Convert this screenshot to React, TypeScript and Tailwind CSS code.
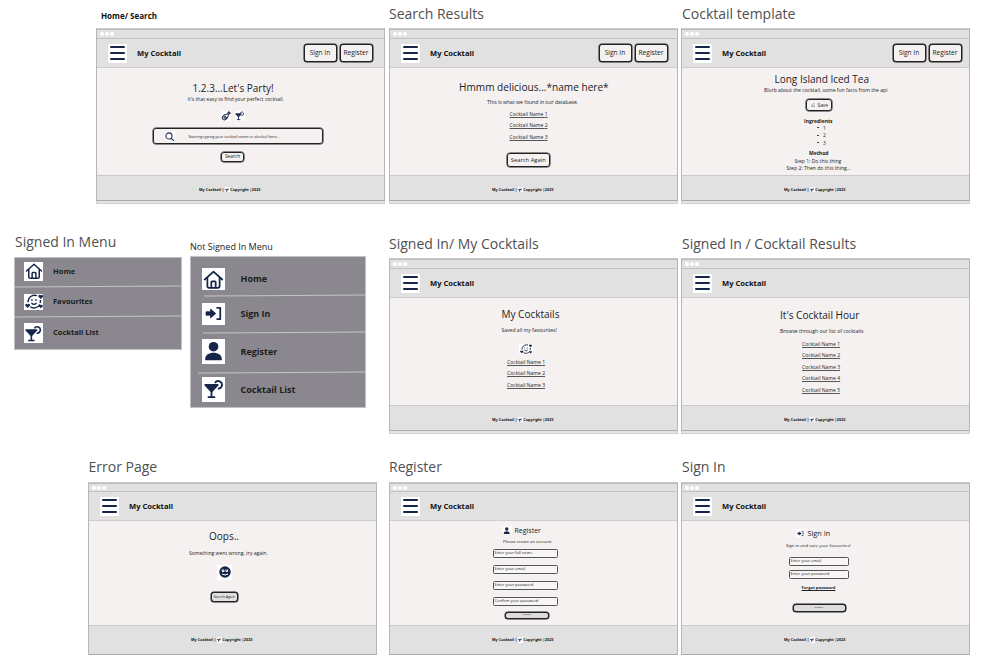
import type { ReactNode } from "react";

const NAVY = "#16264a";

function HomeIcon({ className = "" }: { className?: string }) {
  return (
    <svg viewBox="0 0 24 24" className={className} fill="none" stroke={NAVY} strokeWidth="2" strokeLinejoin="round" strokeLinecap="round">
      <path d="M2 12 12 3l10 9" />
      <path d="M5 10v9.500a2 2 0 0 0 2 2h10a2 2 0 0 0 2-2V10" />
      <path d="M9.500 21v-6a1 1 0 0 1 1-1h3a1 1 0 0 1 1 1v6" />
    </svg>
  );
}

function LoveFaceIcon({ className = "" }: { className?: string }) {
  return (
    <svg viewBox="0 0 24 20" className={className} fill="none" stroke={NAVY} strokeWidth="1.900">
      <path d="M16 2.200C10 .4 4 4 4 11M7 17c3 2.500 10 2.500 13-3M20.500 8v4" />
      <path d="M8 8.500q1.200-1.500 2.400 0M13.500 8.500q1.200-1.500 2.400 0M8.500 12q3.500 3.500 7 0" strokeWidth="1.500" />
      <path d="M21 6.500l-3-3a1.500 1.500 0 0 1 3-1.500 1.500 1.500 0 0 1 3 1.500zM3.500 18.500l-3-3a1.500 1.500 0 0 1 3-1.500 1.500 1.500 0 0 1 3 1.500zM21 19l-2.500-2.500a1.300 1.300 0 0 1 2.500-1.500 1.300 1.300 0 0 1 2.500 1.500z" fill={NAVY} stroke="none" />
    </svg>
  );
}

function MartiniIcon({ className = "" }: { className?: string }) {
  return (
    <svg viewBox="0 0 24 24" className={className} fill="none" stroke={NAVY} strokeWidth="2.200">
      <path d="M1.500 7h15L9.500 14.500h-1z" fill={NAVY} strokeLinejoin="round" />
      <path d="M9 14v7.500M4.500 21.800h9" />
      <path d="M13.200 4.800a4.500 4.500 0 1 1 3.300 6.700" />
    </svg>
  );
}

function BottleIcon({ className = "" }: { className?: string }) {
  return (
    <svg viewBox="0 0 24 24" className={className} fill="none" stroke={NAVY} strokeWidth="2.500">
      <path d="M18 3.500 20.500 6 17 9.500c1.500 4-5 12-9 12S1.500 17 4 13s7-6 10.500-6z" />
      <path d="m18 1 5 5M8 11l6 6M6 14l5 5" />
    </svg>
  );
}

function SearchIcon({ className = "" }: { className?: string }) {
  return (
    <svg viewBox="0 0 24 24" className={className} fill="none" stroke={NAVY} strokeWidth="2.600">
      <circle cx="10" cy="10" r="7.800" />
      <path d="m15.500 15.500 7 7" />
    </svg>
  );
}

function EnterIcon({ className = "" }: { className?: string }) {
  return (
    <svg viewBox="0 0 24 20" className={className}>
      <path d="M2 7.700h6V4l7 6-7 6v-3.700H2z" fill={NAVY} stroke={NAVY} strokeLinejoin="round" />
      <path d="M16 2.500h5v15h-5" fill="none" stroke={NAVY} strokeWidth="2.400" strokeLinejoin="round" />
    </svg>
  );
}

function PersonIcon({ className = "" }: { className?: string }) {
  return (
    <svg viewBox="0 0 24 24" className={className} fill={NAVY}>
      <circle cx="12" cy="6.500" r="5.500" />
      <path d="M2.500 22v-1.500C2.500 16 7 13.500 12 13.500s9.500 2.500 9.500 7V22z" />
    </svg>
  );
}

function WinkIcon({ className = "" }: { className?: string }) {
  return (
    <svg viewBox="0 0 24 24" className={className}>
      <circle cx="12" cy="12" r="11.500" fill={NAVY} />
      <path d="M5 8h5v3H6M14 7v4h3V7M6 16q6 4 12 0" fill="none" stroke="#fff" strokeWidth="2" />
    </svg>
  );
}

function Btn({ children, className = "" }: { children: ReactNode; className?: string }) {
  return (
    <div className={`flex shrink-0 items-center justify-center rounded-[3px] border border-[#222] whitespace-nowrap text-[#222] shadow-[0_0_0_0.5px_#222] ${className}`}>
      {children}
    </div>
  );
}

function Line({ children, className = "" }: { children: ReactNode; className?: string }) {
  return <div className={`h-[6px] shrink-0 leading-[6px] whitespace-nowrap ${className}`}>{children}</div>;
}

function Heading({ children, className = "" }: { children: ReactNode; className?: string }) {
  return <h2 className={`h-[12px] shrink-0 leading-[12px] whitespace-nowrap text-[#222] ${className}`}>{children}</h2>;
}

function Links({ count, className = "" }: { count: number; className?: string }) {
  return (
    <div className={`flex flex-col gap-[5.5px] text-[5.05px] underline decoration-[#555] decoration-[0.5px] underline-offset-[1px] ${className}`}>
      {Array.from({ length: count }, (_, i) => (
        <Line key={i}>Cocktail Name {i + 1}</Line>
      ))}
    </div>
  );
}

type FrameProps = {
  title: string;
  titleClass?: string;
  authClass?: string;
  short?: boolean;
  children: ReactNode;
};

function Frame({ title, titleClass = "h-[28px] pb-[4px] text-[14px] text-[#505050]", authClass, short, children }: FrameProps) {
  return (
    <section className="w-[289px] shrink-0">
      <h1 className={`flex items-end leading-[20px] whitespace-nowrap ${titleClass}`}>{title}</h1>
      <div className="border-x border-t border-x-[#b6b6b6] border-t-[#cbcbcb]">
        <div className={`flex items-center gap-[1px] border-t border-[#bdbdbd] bg-[#e1e1e1] pl-[3px] ${short ? "h-[8px]" : "h-[9px]"}`}>
          <i className="size-[4px] rounded-full bg-white" />
          <i className="size-[4px] rounded-full bg-white" />
          <i className="size-[4px] rounded-full bg-white" />
        </div>
        <header className="flex h-[30px] items-center border-y border-t-[#c2c2c2] border-b-[#cdcdcd] bg-[#e1e1e1] pl-[10.5px]">
          <div className="flex h-[19px] w-[19.5px] flex-col items-center justify-center gap-[3.5px] bg-white">
            <b className="h-[2.500px] w-[15.5px] rounded-full bg-[#16264a]" />
            <b className="h-[2.500px] w-[15.5px] rounded-full bg-[#16264a]" />
            <b className="h-[2.500px] w-[15.5px] rounded-full bg-[#16264a]" />
          </div>
          <strong className="pl-[10px] text-[7.6px] leading-[10px] whitespace-nowrap text-[#111]">My Cocktail</strong>
          {authClass && (
            <div className={`ml-auto flex gap-[3px] text-[6.6px] ${authClass}`}>
              <Btn className="h-[18px] w-[33px] bg-[#f5f1f1]">Sign In</Btn>
              <Btn className="h-[18px] w-[33px] bg-[#f5f1f1]">Register</Btn>
            </div>
          )}
        </header>
        <main className={`flex flex-col overflow-hidden bg-[#f5f1f1] text-[5px] text-[#222] ${short ? "h-[104px]" : "h-[107px]"}`}>{children}</main>
        <footer className={`flex items-center border-y border-t-[#c9c9c9] border-b-[#ababab] bg-[#e1e1e1] pl-[102px] text-[3.8px] font-bold whitespace-nowrap text-[#111] ${short ? "h-[30px]" : "h-[26px] pt-[3.500px]"}`}>
          My Cocktail |
          <span className="mx-[0.5px] inline-block bg-white p-[0.3px]">
            <MartiniIcon className="size-[4.500px]" />
          </span>
          Copyright |2023
        </footer>
      </div>
      {!short && <div className="h-[3px] border-x border-b border-[#d0d0d0] bg-[#e4e4e4]" />}
    </section>
  );
}

function Field({ children, className = "" }: { children: ReactNode; className?: string }) {
  return (
    <div className={`flex h-[9px] shrink-0 items-center rounded-[1.5px] border border-[#555] bg-[#f8f5f6] pb-px pl-[0.5px] text-[4px] leading-[6px] whitespace-nowrap ${className}`}>
      {children}
    </div>
  );
}

const TITLE3 = "h-[48px] pb-[5px] text-[14px] text-[#505050]";

export default function App() {
  return (
    <div className="h-[666px] w-[988px] overflow-hidden bg-white font-['Open_Sans',sans-serif]">
      <div className="flex pl-[96px]">
        <Frame title="Home/ Search" titleClass="h-[28px] pb-[2px] pl-[5px] text-[8px] font-bold text-[#111]" authClass="pr-[11.500px]">
          <Heading className="mt-[13.7px] ml-[95.5px] text-[10px]">1.2.3...Let's Party!</Heading>
          <Line className="mt-[2.2px] ml-[90.5px] text-[5.05px]">It's that easy to find your perfect cocktail.</Line>
          <div className="mt-[9px] ml-[123.500px] flex h-[10.5px] shrink-0 gap-[4px]">
            <span className="flex w-[10px] items-center justify-center bg-white"><BottleIcon className="size-[10px]" /></span>
            <span className="flex w-[10px] items-center justify-center bg-white"><MartiniIcon className="size-[9.500px]" /></span>
          </div>
          <div className="mt-[7px] ml-[55.5px] flex h-[16px] w-[170px] shrink-0 items-center rounded-[3px] border border-[#222] shadow-[0_0_0_0.5px_#222]">
            <span className="ml-[11px] flex h-[10px] w-[10px] items-center justify-center bg-white"><SearchIcon className="size-[9.500px]" /></span>
            <span className="ml-[14px] text-[3.8px] whitespace-nowrap">Starting typing your cocktail name or alcohol here...</span>
          </div>
          <Btn className="mt-[8px] ml-[124px] h-[10px] w-[23px] pb-px text-[4.8px]">Search</Btn>
        </Frame>
        <div className="ml-[4px]">
          <Frame title="Search Results" authClass="pr-[9.500px]">
            <Heading className="mt-[13px] ml-[69px] text-[10.1px]">Hmmm delicious...*name here*</Heading>
            <Line className="mt-[5.7px] ml-[97px] text-[5.1px]">This is what we found in our database.</Line>
            <Links count={3} className="mt-[6px] ml-[119.500px]" />
            <Btn className="mt-[13.5px] ml-[116.500px] h-[13.500px] w-[43.500px] text-[5.8px]">Search Again</Btn>
          </Frame>
        </div>
        <div className="ml-[3px]">
          <Frame title="Cocktail template" titleClass="h-[28px] pb-[4px] pl-px text-[14px] text-[#505050]" authClass="pr-[7.500px]">
            <Heading className="mt-[5.200px] ml-[92.500px] text-[10px]">Long Island Iced Tea</Heading>
            <Line className="mt-[1.600px] ml-[82px] text-[5.05px]">Blurb about the cocktail, some fun facts from the api</Line>
            <Btn className="mt-[6.500px] ml-[124px] h-[12px] w-[26px] gap-[2px] text-[4.8px]">
              <span className="bg-white p-[0.5px]"><LoveFaceIcon className="size-[4.500px]" /></span>
              Save
            </Btn>
            <Line className="mt-[6.300px] ml-[122px] font-bold">Ingredients</Line>
            <ul className="mt-[1.3px] ml-[135px] flex flex-col gap-[1.35px]">
              {[1, 2, 3].map((n) => (
                <li key={n} className="flex h-[6px] items-center gap-[4px] leading-[6px]">
                  <i className="h-px w-[2px] bg-[#444]" />
                  {n}
                </li>
              ))}
            </ul>
            <Line className="mt-[4.3px] ml-[127px] font-bold">Method</Line>
            <Line className="mt-[1.7px] ml-[112.5px]">Step 1: Do this thing</Line>
            <Line className="mt-[1px] ml-[104.500px] text-[5.100px]">Step 2: Then do this thing...</Line>
          </Frame>
        </div>
      </div>

      <div className="flex pl-[14px]">
        <section className="w-[168px]">
          <h1 className="flex h-[53px] items-end pb-[5px] pl-px text-[14px] leading-[20px] whitespace-nowrap text-[#505050]">Signed In Menu</h1>
          <nav className="h-[92.500px] border border-[#c2c2c6] bg-[#8a888e] text-[7.5px] font-bold text-[#1c1c1c]">
            <div className="flex h-[27.500px] items-center gap-[10px] pb-px pl-[9px]">
              <span className="flex h-[19px] w-[19px] items-center justify-center bg-white"><HomeIcon className="size-[18px]" /></span>
              Home
            </div>
            <div className="h-[1.3px] -rotate-[0.3deg] bg-[#c4c4c8]" />
            <div className="flex h-[29.500px] items-center gap-[10px] pl-[9px]">
              <span className="flex h-[16px] w-[19px] items-center justify-center bg-white"><LoveFaceIcon className="h-[15px] w-[18px]" /></span>
              Favourites
            </div>
            <div className="h-[1.3px] -rotate-[0.3deg] bg-[#c4c4c8]" />
            <div className="flex h-[31px] items-center gap-[10px] pl-[9px]">
              <span className="flex h-[20px] w-[19px] items-center justify-center bg-white"><MartiniIcon className="size-[17px]" /></span>
              Cocktail List
            </div>
          </nav>
        </section>
        <section className="ml-[8px] w-[175.500px]">
          <h1 className="flex h-[52px] items-end text-[9px] leading-[19px] whitespace-nowrap text-[#222]">Not Signed In Menu</h1>
          <nav className="flex h-[152px] flex-col border border-[#c2c2c6] bg-[#8a888e] text-[9px] font-bold text-[#1c1c1c]">
            <div className="mt-[11px] flex h-[22px] items-center gap-[15.500px] pl-[11px]">
              <span className="flex h-[22px] w-[23px] items-center justify-center bg-white"><HomeIcon className="size-[21px]" /></span>
              Home
            </div>
            <div className="mt-[5px] ml-[13px] h-[1.3px] -rotate-[0.3deg] bg-[#c4c4c8]" />
            <div className="mt-[6.700px] flex h-[22px] items-center gap-[15.500px] pl-[11px]">
              <span className="flex h-[22px] w-[23px] items-center justify-center bg-white"><EnterIcon className="h-[15px] w-[19px]" /></span>
              Sign In
            </div>
            <div className="mt-[7.500px] ml-[12px] h-[1.3px] -rotate-[0.3deg] bg-[#c4c4c8]" />
            <div className="mt-[5.200px] flex h-[25px] items-center gap-[15.500px] pl-[11px]">
              <span className="flex h-[25px] w-[23px] items-center justify-center bg-white"><PersonIcon className="size-[21px]" /></span>
              Register
            </div>
            <div className="mt-[8.500px] ml-[7px] h-[1.3px] -rotate-[0.3deg] bg-[#c4c4c8]" />
            <div className="mt-[3.200px] flex h-[25px] items-center gap-[15.500px] pl-[11px]">
              <span className="flex h-[25px] w-[23px] items-center justify-center bg-white"><MartiniIcon className="size-[20px]" /></span>
              Cocktail List
            </div>
          </nav>
        </section>
        <div className="ml-[23.500px] pt-[26px]">
          <Frame title="Signed In/ My Cocktails">
            <Heading className="mt-[10.400px] ml-[111.500px] text-[10px]">My Cocktails</Heading>
            <Line className="mt-[6.300px] ml-[111.5px] text-[5.05px]">Saved all my favourites!</Line>
            <span className="mt-[11px] ml-[129px] flex h-[10.500px] w-[13.500px] shrink-0 items-center justify-center bg-white"><LoveFaceIcon className="h-[10px] w-[12px]" /></span>
            <Links count={3} className="mt-[4.500px] ml-[117px]" />
          </Frame>
        </div>
        <div className="ml-[3px] pt-[26px]">
          <Frame title="Signed In / Cocktail Results" titleClass="h-[28px] pb-[4px] pl-px text-[14px] text-[#505050]">
            <Heading className="mt-[10.800px] ml-[98px] text-[10.1px]">It's Cocktail Hour</Heading>
            <Line className="mt-[7px] ml-[98px] text-[5.100px]">Browse through our list of cocktails</Line>
            <Links count={5} className="mt-[7px] ml-[120px]" />
          </Frame>
        </div>
      </div>

      <div className="flex pl-[88px]">
        <Frame title="Error Page" titleClass="h-[48px] pb-[5px] pl-[0.5px] text-[14px] text-[#505050]" short>
          <Heading className="mt-[9px] ml-[120px] text-[10px]">Oops..</Heading>
          <Line className="mt-[7.700px] ml-[100px] text-[5.05px]">Something went wrong, try again.</Line>
          <span className="mt-[9px] ml-[128px] flex size-[15px] shrink-0 items-center justify-center bg-white"><WinkIcon className="size-[12px]" /></span>
          <Btn className="mt-[12.500px] ml-[122px] h-[10px] w-[26.5px] bg-[#e0e1e0] pb-px text-[3.5px]">Search Again</Btn>
        </Frame>
        <div className="ml-[12px]">
          <Frame title="Register" titleClass={TITLE3} short>
            <div className="mt-[5px] ml-[112.500px] flex h-[9px] shrink-0 items-center gap-[3px] text-[7px] leading-[9px]">
              <span className="flex size-[9px] items-center justify-center bg-white"><PersonIcon className="size-[7.500px]" /></span>
              Register
            </div>
            <Line className="mt-[3.800px] ml-[113px] text-[4.2px]">Please create an account</Line>
            <div className="mt-[4px] ml-[103px] flex w-[65px] flex-col gap-[7.1px]">
              <Field>Enter your full name</Field>
              <Field>Enter your email</Field>
              <Field>Enter your password</Field>
              <Field>Confirm your password</Field>
            </div>
            <Btn className="mt-[5.500px] ml-[115px] h-[7.500px] w-[44px] bg-[#dcdcdc] text-[2.5px]">Submit</Btn>
          </Frame>
        </div>
        <div className="ml-[3px]">
          <Frame title="Sign In" titleClass="h-[48px] pb-[5px] pl-px text-[14px] text-[#505050]" short>
            <div className="mt-[7.700px] ml-[114px] flex h-[9px] shrink-0 items-center gap-[3px] text-[7.3px] leading-[9px]">
              <span className="flex size-[8.500px] items-center justify-center bg-white"><EnterIcon className="size-[7px]" /></span>
              Sign In
            </div>
            <Line className="mt-[4.600px] ml-[104px] text-[4.3px]">Sign in and save your favourites!</Line>
            <div className="mt-[8.700px] ml-[107px] flex w-[59.5px] flex-col gap-[4.1px]">
              <Field>Enter your email</Field>
              <Field>Enter your password</Field>
            </div>
            <Line className="mt-[5.800px] ml-[119.500px] text-[4.1px] font-bold underline decoration-[0.5px]">Forgot password</Line>
            <Btn className="mt-[13.500px] ml-[110.500px] h-[7.500px] w-[53px] bg-[#dcdcdc] text-[2.5px]">Submit</Btn>
          </Frame>
        </div>
      </div>
    </div>
  );
}
